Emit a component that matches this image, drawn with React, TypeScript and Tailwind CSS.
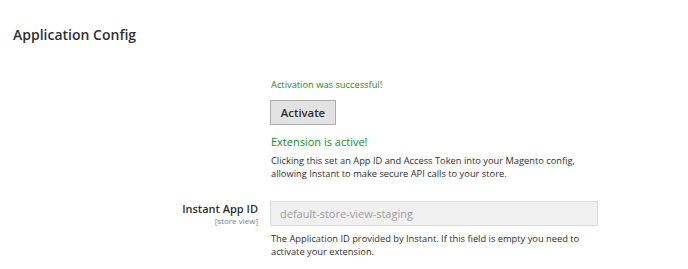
const App = () => {
    return (
        <div className="w-[688px] h-[269px] bg-white text-[#303030]" style={{ fontFamily: '"Open Sans", sans-serif' }}>
            <div className="pl-[13px] pt-[25px]">
                <h2 className="text-[14px] font-semibold leading-[20px]">Application Config</h2>
            </div>

            <div className="flex mt-[33px]">
                <div className="w-[258px] shrink-0" />
                <div className="pl-[12px] w-[400px]">
                    <p className="text-[9.3px] leading-[14px] text-[#1c8a1c] pl-[1px]">Activation was successful!</p>
                    <button className="mt-[8px] w-[66px] h-[25px] bg-[#e3e3e3] border border-[#adadad] text-[11.3px] font-semibold text-[#303030] leading-none">
                        Activate
                    </button>
                    <p className="mt-[9px] text-[11px] leading-[16px] text-[#1c8a1c] pl-[1px]">Extension is active!</p>
                    <p className="mt-[4px] text-[9.3px] leading-[13px] text-[#303030] whitespace-nowrap pl-[1px]">
                        Clicking this set an App ID and Access Token into your Magento config,
                        <br />
                        allowing Instant to make secure API calls to your store.
                    </p>
                </div>
            </div>

            <div className="flex mt-[21px]">
                <div className="w-[258px] shrink-0 text-right">
                    <div className="text-[11px] font-semibold leading-[15px]">Instant App ID</div>
                    <div className="text-[8px] leading-[10px] text-[#808080]">[store view]</div>
                </div>
                <div className="pl-[12px]">
                    <input
                        disabled
                        placeholder="default-store-view-staging"
                        className="block w-[328px] h-[25px] px-[9px] bg-[#f0f0f0] border border-[#dadada] text-[11px] placeholder:text-[#a0a0a0] outline-none"
                        style={{ fontFamily: '"Open Sans", sans-serif' }}
                    />
                    <p className="mt-[6px] text-[9.3px] leading-[13px] text-[#303030] whitespace-nowrap pl-[1px]">
                        The Application ID provided by Instant. If this field is empty you need to
                        <br />
                        activate your extension.
                    </p>
                </div>
            </div>
        </div>
    );
};

export default App;
